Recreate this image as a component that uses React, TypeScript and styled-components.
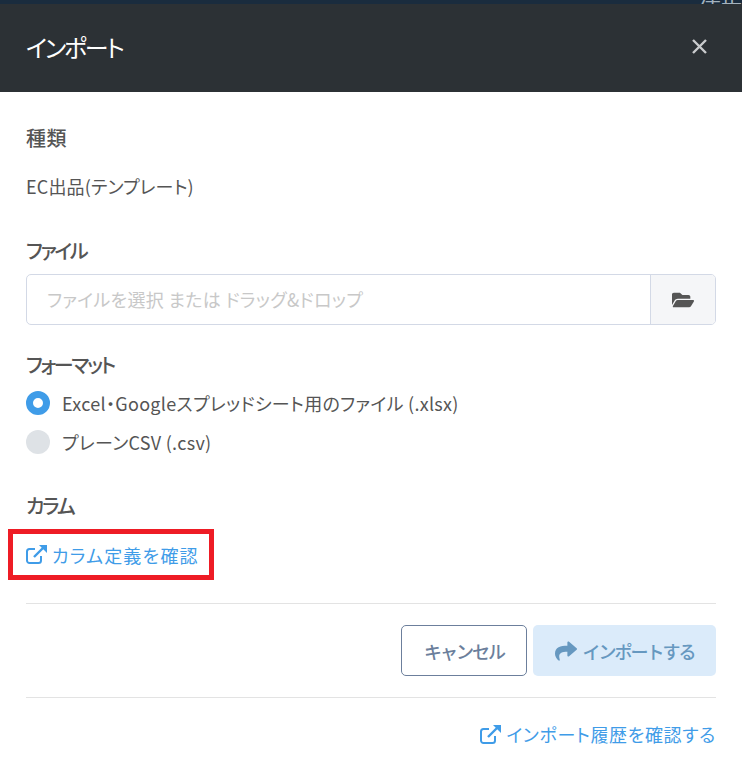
import styled, { createGlobalStyle } from "styled-components";
import { FaFolderOpen, FaShare } from "react-icons/fa";

const GlobalStyle = createGlobalStyle`
  html, body {
    margin: 0;
    padding: 0;
    background: #fff;
  }
  body {
    font-family: "Noto Sans CJK JP", "Noto Sans", sans-serif;
    color: #555;
    font-feature-settings: "palt";
  }
`;

const TopStrip = styled.div`
  height: 4px;
  background: #1a2c3e;
  overflow: hidden;
  display: flex;
  justify-content: flex-end;
`;

const TopStripText = styled.span`
  font-size: 21px;
  line-height: 21px;
  margin-top: -16px;
  color: #a4b2bd;
`;

const Header = styled.header`
  height: 88px;
  box-sizing: border-box;
  background: #2c3135;
  display: flex;
  align-items: center;
  justify-content: space-between;
  padding: 0 35px 0 26px;
`;

const Title = styled.h1`
  margin: 0 0 4px;
  font-size: 24px;
  font-weight: 400;
  letter-spacing: -2.2px;
  color: #fff;
`;

const CloseButton = styled.button`
  border: 0;
  padding: 0;
  margin-bottom: 3px;
  background: none;
  display: flex;
`;

const Body = styled.main`
  padding: 31px 26px 0;
  display: flex;
  flex-direction: column;
`;

const Label = styled.div<{ $mb: number; $spacing: number }>`
  font-size: 20px;
  line-height: 30px;
  font-weight: 500;
  letter-spacing: ${(p) => p.$spacing}px;
  color: #555;
  margin-bottom: ${(p) => p.$mb}px;
`;

const Value = styled.div`
  font-size: 18px;
  line-height: 30px;
  letter-spacing: 0.15px;
  color: #555;
  margin-bottom: 35px;
`;

const FileField = styled.div`
  display: flex;
  height: 51px;
  box-sizing: border-box;
  border: 1px solid #d3d9e6;
  border-radius: 5px;
  overflow: hidden;
  margin-bottom: 25px;
`;

const FilePlaceholder = styled.div`
  flex: 1;
  padding: 0 0 2px 20px;
  display: flex;
  align-items: center;
  font-size: 18px;
  letter-spacing: 0.3px;
  color: #c8c8c8;
`;

const FileButton = styled.div`
  width: 65px;
  box-sizing: border-box;
  background: #f5f6f8;
  border-left: 1px solid #d3d9e6;
  display: flex;
  align-items: center;
  justify-content: center;
  color: #555;
  font-size: 22px;
`;

const RadioRow = styled.label`
  display: flex;
  align-items: center;
  gap: 12px;
  height: 39px;
  font-size: 18px;
  letter-spacing: 0.3px;
  color: #555;
`;

const RadioDot = styled.span<{ $checked?: boolean }>`
  width: 24px;
  height: 24px;
  border-radius: 50%;
  box-sizing: border-box;
  background: ${(p) => (p.$checked ? "#fff" : "#dee2e6")};
  border: ${(p) => (p.$checked ? "7px solid #3f9ce8" : "none")};
`;

const Section = styled.section`
  margin-top: 30px;
`;

const Highlight = styled.div`
  display: inline-flex;
  align-items: center;
  height: 51px;
  box-sizing: border-box;
  width: 206px;
  margin: 8px 0 23px -18px;
  padding-left: 13px;
  border: 5px solid #ee1c25;
`;

const LinkText = styled.a<{ $spacing: number }>`
  display: inline-flex;
  align-items: center;
  gap: 5px;
  font-size: 18px;
  letter-spacing: ${(p) => p.$spacing}px;
  color: #3f9ce8;
`;

const Divider = styled.hr`
  border: 0;
  height: 1px;
  margin: 0;
  background: #e3e3e3;
`;

const Actions = styled.div`
  display: flex;
  justify-content: flex-end;
  gap: 6px;
  padding: 21px 0;
`;

const Button = styled.button`
  height: 51px;
  box-sizing: border-box;
  border-radius: 5px;
  font-family: inherit;
  font-size: 18px;
  font-weight: 500;
  letter-spacing: -2px;
  display: flex;
  align-items: center;
  justify-content: center;
  gap: 6px;
`;

const CancelButton = styled(Button)`
  width: 126px;
  background: #fff;
  border: 1px solid #6c7f9c;
  color: #6c7f9c;
`;

const ImportButton = styled(Button)`
  width: 183px;
  background: #dbebfa;
  border: 0;
  color: #6698c0;
`;

const Footer = styled.div`
  display: flex;
  justify-content: flex-end;
  padding-top: 23px;
`;

const CloseIcon = () => (
  <svg width="15" height="15" viewBox="0 0 15 15" stroke="#c9cbcd" strokeWidth="2.4">
    <path d="M1 1l13 13M14 1L1 14" />
  </svg>
);

const ExternalIcon = () => (
  <svg width="21" height="19" viewBox="0 0 21 19" fill="none">
    <path
      d="M9 4H3.5A2.5 2.5 0 0 0 1 6.5v9A2.5 2.5 0 0 0 3.5 18h9a2.5 2.5 0 0 0 2.5-2.5V11"
      stroke="currentColor"
      strokeWidth="2"
    />
    <path d="M8 12L17 3" stroke="currentColor" strokeWidth="2.4" />
    <path d="M13 0h8v8z" fill="currentColor" />
  </svg>
);

export default function App() {
  return (
    <>
      <GlobalStyle />
      <TopStrip>
        <TopStripText>津正</TopStripText>
      </TopStrip>
      <Header>
        <Title>インポート</Title>
        <CloseButton aria-label="閉じる">
          <CloseIcon />
        </CloseButton>
      </Header>
      <Body>
        <Label $mb={18} $spacing={0.5}>種類</Label>
        <Value>EC出品(テンプレート)</Value>
        <Label $mb={8} $spacing={-2.2}>ファイル</Label>
        <FileField>
          <FilePlaceholder>ファイルを選択 または ドラッグ&ドロップ</FilePlaceholder>
          <FileButton>
            <FaFolderOpen />
          </FileButton>
        </FileField>
        <Label $mb={3} $spacing={-2.2}>フォーマット</Label>
        <RadioRow>
          <RadioDot $checked />
          Excel・Googleスプレッドシート用のファイル (.xlsx)
        </RadioRow>
        <RadioRow>
          <RadioDot />
          プレーンCSV (.csv)
        </RadioRow>
        <Section>
          <Label $mb={0} $spacing={-2.2}>カラム</Label>
          <Highlight>
            <LinkText $spacing={1.2}>
              <ExternalIcon />
              カラム定義を確認
            </LinkText>
          </Highlight>
        </Section>
        <Divider />
        <Actions>
          <CancelButton>キャンセル</CancelButton>
          <ImportButton>
            <FaShare size={22} />
            インポートする
          </ImportButton>
        </Actions>
        <Divider />
        <Footer>
          <LinkText $spacing={0.65}>
            <ExternalIcon />
            インポート履歴を確認する
          </LinkText>
        </Footer>
      </Body>
    </>
  );
}
